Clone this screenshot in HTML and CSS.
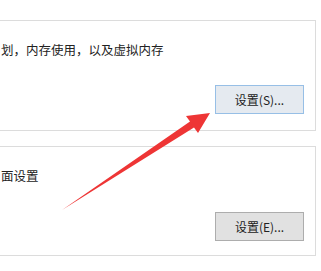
FILE: index.html
```html
<!DOCTYPE html>
<html>

<head>
  <meta charset="UTF-8" />
  <title>性能选项</title>
  <link rel="stylesheet" href="styles.css">
</head>

<body>
  <div class="page">
    <!-- 性能 -->
    <div class="group group-perf">
      <div class="group-desc">划，内存使用，以及虚拟内存</div>
      <button class="btn btn-hover">设置(S)...</button>
    </div>

    <!-- 用户配置文件 -->
    <div class="group group-profile">
      <div class="group-desc">面设置</div>
      <button class="btn">设置(E)...</button>
    </div>
  </div>

  <!-- 红色箭头标注 -->
  <svg class="arrow" width="321" height="271" viewBox="0 0 321 271">
    <polygon points="62,210 190,121.5 186,116 210,113 198,133 194,127.5" fill="#ee3535" />
  </svg>
</body>

</html>
```

FILE: styles.css
```css
body {
  margin: 0;
  background-color: #fff;
  color: #222;
  font-family: "Noto Sans CJK SC", "Noto Sans", sans-serif;
  font-size: 12.5px;
  overflow: hidden;
}

.page {
  padding: 20px 5px 0 0;
}

.group {
  box-sizing: border-box;
  margin-left: -30px;
  padding: 20px 11px 16px 30px;
  border: 1px solid #dcdcdc;
  display: flex;
  flex-direction: column;
}

.group-perf {
  height: 111px;
}

.group-profile {
  height: 110px;
  margin-top: 15px;
  padding-bottom: 14px;
}

.group-desc {
  line-height: 17px;
  white-space: nowrap;
}

.btn {
  margin-top: auto;
  align-self: flex-end;
  width: 89px;
  height: 29px;
  padding: 0;
  border: 1px solid #adadad;
  background-color: #e1e1e1;
  color: #222;
  font-family: "Noto Sans CJK SC", "Noto Sans", sans-serif;
  font-size: 12px;
}

.btn-hover {
  border-color: #97bfe6;
  background-color: #e5eaf0;
}

/* Annotation overlay */
.arrow {
  position: absolute;
  top: 0;
  left: 0;
  pointer-events: none;
}
```
